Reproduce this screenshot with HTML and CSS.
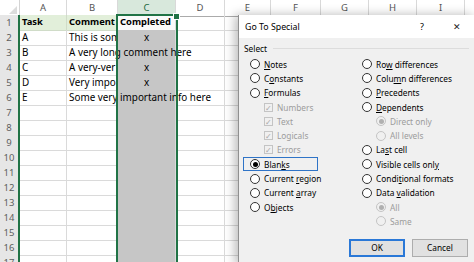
FILE: index.html
```html
<!DOCTYPE html>
<html lang="en">
<head>
    <meta charset="UTF-8">
    <title>Go To Special</title>
    <link rel="stylesheet" href="styles.css">
</head>
<body>
    <div class="sheet">
        <div class="row head">
            <div class="corner"><span class="tri"></span></div>
            <div class="ch">A</div><div class="ch">B</div><div class="ch on">C</div><div class="ch">D</div>
            <div class="ch">E</div><div class="ch">F</div><div class="ch">G</div><div class="ch">H</div><div class="ch">I</div>
        </div>
        <div class="row">
            <div class="rh">1</div><div class="c fill b">Task</div><div class="c fill b">Comment</div><div class="c act b">Completed</div><div class="c"></div><div class="c"></div>
        </div>
        <div class="row">
            <div class="rh">2</div><div class="c">A</div><div class="c">This is som</div><div class="c sel mid">x</div><div class="c"></div><div class="c"></div>
        </div>
        <div class="row">
            <div class="rh">3</div><div class="c">B</div><div class="c spill">A very long comment here</div><div class="c sel"></div><div class="c"></div><div class="c"></div>
        </div>
        <div class="row">
            <div class="rh">4</div><div class="c">C</div><div class="c">A very-ver</div><div class="c sel mid">x</div><div class="c"></div><div class="c"></div>
        </div>
        <div class="row">
            <div class="rh">5</div><div class="c">D</div><div class="c">Very impo</div><div class="c sel mid">x</div><div class="c"></div><div class="c"></div>
        </div>
        <div class="row">
            <div class="rh">6</div><div class="c">E</div><div class="c spill">Some very important info here</div><div class="c sel"></div><div class="c"></div><div class="c"></div>
        </div>
        <div class="row"><div class="rh">7</div><div class="c"></div><div class="c"></div><div class="c sel"></div><div class="c"></div><div class="c"></div></div>
        <div class="row"><div class="rh">8</div><div class="c"></div><div class="c"></div><div class="c sel"></div><div class="c"></div><div class="c"></div></div>
        <div class="row"><div class="rh">9</div><div class="c"></div><div class="c"></div><div class="c sel"></div><div class="c"></div><div class="c"></div></div>
        <div class="row"><div class="rh">10</div><div class="c"></div><div class="c"></div><div class="c sel"></div><div class="c"></div><div class="c"></div></div>
        <div class="row"><div class="rh">11</div><div class="c"></div><div class="c"></div><div class="c sel"></div><div class="c"></div><div class="c"></div></div>
        <div class="row"><div class="rh">12</div><div class="c"></div><div class="c"></div><div class="c sel"></div><div class="c"></div><div class="c"></div></div>
        <div class="row"><div class="rh">13</div><div class="c"></div><div class="c"></div><div class="c sel"></div><div class="c"></div><div class="c"></div></div>
        <div class="row"><div class="rh">14</div><div class="c"></div><div class="c"></div><div class="c sel"></div><div class="c"></div><div class="c"></div></div>
        <div class="row"><div class="rh">15</div><div class="c"></div><div class="c"></div><div class="c sel"></div><div class="c"></div><div class="c"></div></div>
        <div class="row"><div class="rh">16</div><div class="c"></div><div class="c"></div><div class="c sel"></div><div class="c"></div><div class="c"></div></div>
        <div class="row"><div class="rh">17</div><div class="c"></div><div class="c"></div><div class="c sel"></div><div class="c"></div><div class="c"></div></div>

        <div class="selection"><span class="handle"></span></div>

        <div class="dlg">
            <div class="dlg-title">
                <span>Go To Special</span>
                <span class="help">?</span>
                <span class="close">&#x2715;</span>
            </div>
            <div class="dlg-body">
                <div class="legend"><span>Select</span><span class="rule"></span></div>
                <div class="options">
                    <div class="col">
                        <div class="opt"><span class="radio"></span><span><u>N</u>otes</span></div>
                        <div class="opt"><span class="radio"></span><span>C<u>o</u>nstants</span></div>
                        <div class="opt"><span class="radio"></span><span><u>F</u>ormulas</span></div>
                        <div class="opt sub off"><span class="check">&#x2713;</span><span>Numbers</span></div>
                        <div class="opt sub off"><span class="check">&#x2713;</span><span>Text</span></div>
                        <div class="opt sub off"><span class="check">&#x2713;</span><span>Logicals</span></div>
                        <div class="opt sub off"><span class="check">&#x2713;</span><span>Errors</span></div>
                        <div class="opt focus"><span class="radio on"></span><span>Blan<u>k</u>s</span></div>
                        <div class="opt"><span class="radio"></span><span>Current <u>r</u>egion</span></div>
                        <div class="opt"><span class="radio"></span><span>Current <u>a</u>rray</span></div>
                        <div class="opt"><span class="radio"></span><span>O<u>b</u>jects</span></div>
                    </div>
                    <div class="col">
                        <div class="opt"><span class="radio"></span><span>Ro<u>w</u> differences</span></div>
                        <div class="opt"><span class="radio"></span><span>Colu<u>m</u>n differences</span></div>
                        <div class="opt"><span class="radio"></span><span><u>P</u>recedents</span></div>
                        <div class="opt"><span class="radio"></span><span><u>D</u>ependents</span></div>
                        <div class="opt sub off"><span class="radio on"></span><span>Direct only</span></div>
                        <div class="opt sub off"><span class="radio"></span><span>All levels</span></div>
                        <div class="opt"><span class="radio"></span><span>La<u>s</u>t cell</span></div>
                        <div class="opt"><span class="radio"></span><span>Visible cells onl<u>y</u></span></div>
                        <div class="opt"><span class="radio"></span><span>Condi<u>t</u>ional formats</span></div>
                        <div class="opt"><span class="radio"></span><span>Data <u>v</u>alidation</span></div>
                        <div class="opt sub off"><span class="radio on"></span><span>All</span></div>
                        <div class="opt sub off"><span class="radio"></span><span>Same</span></div>
                    </div>
                </div>
                <div class="buttons">
                    <button class="btn default">OK</button>
                    <button class="btn">Cancel</button>
                </div>
            </div>
        </div>
    </div>
</body>
</html>
```
FILE: styles.css
```css
body {
    margin: 0;
    background: #ffffff;
    overflow: hidden;
    font-family: "Noto Sans", sans-serif;
}

.sheet {
    position: relative;
    width: 474px;
    height: 262px;
    overflow: hidden;
}

.row {
    display: grid;
    grid-template-columns: 20px 47px 51px 58px 49px 46px 50px 48px 48px 48px 48px;
    height: 15px;
}

.head {
    background: #ffffff;
}

.corner {
    border-right: 1px solid #d4d4d4;
    border-bottom: 1px solid #ababab;
    display: flex;
    align-items: flex-end;
    justify-content: flex-end;
    padding: 0 2px 2px 0;
    box-sizing: border-box;
}

.tri {
    width: 0;
    height: 0;
    border-left: 8px solid transparent;
    border-bottom: 8px solid #dcdcdc;
}

.ch {
    font-size: 9.5px;
    color: #555;
    text-align: center;
    line-height: 15px;
    border-right: 1px solid #d9d9d9;
    border-bottom: 1px solid #ababab;
    box-sizing: border-box;
}

.ch.on {
    background: #d8e8dc;
    color: #1e6b42;
    border-bottom: 2px solid #217346;
}

.rh {
    font-size: 9.5px;
    color: #5e5e5e;
    text-align: center;
    line-height: 15px;
    background: #e6e6e6;
    border-right: 2px solid #217346;
    border-bottom: 1px solid #c8c8c8;
    box-sizing: border-box;
}

.c {
    font-size: 9.9px;
    line-height: 14px;
    color: #000;
    padding-left: 2px;
    white-space: nowrap;
    overflow: hidden;
    border-right: 1px solid #dadada;
    border-bottom: 1px solid #dadada;
    box-sizing: border-box;
}

.c.b {
    font-weight: bold;
    font-size: 9.4px;
}

.c.fill {
    background: #e2efda;
    border-right-color: #d0dcc8;
    border-bottom-color: #d0dcc8;
}

.c.act {
    background: #fafafa;
}

.c.sel {
    background: #c6c6c6;
    border-bottom-color: #acacac;
}

.c.mid {
    text-align: center;
    padding-left: 0;
}

.c.spill {
    overflow: visible;
    position: relative;
    z-index: 1;
}

.selection {
    position: absolute;
    left: 116px;
    top: 14px;
    width: 62px;
    height: 260px;
    border: 2px solid #217346;
    box-sizing: border-box;
    z-index: 2;
}

.handle {
    position: absolute;
    right: -4px;
    top: -3px;
    width: 5px;
    height: 5px;
    background: #217346;
    border: 1px solid #fff;
}

/* dialog */
.dlg {
    position: absolute;
    left: 238px;
    top: 15px;
    width: 236px;
    height: 250px;
    background: #f0f0f0;
    border-left: 1px solid #8f8f8f;
    box-shadow: -3px 0 10px rgba(0,0,0,0.28);
    z-index: 3;
    font-size: 8.3px;
    color: #000;
}

.dlg-title {
    height: 23px;
    background: #ffffff;
    display: flex;
    align-items: center;
    padding-left: 6px;
    font-size: 8.8px;
}

.help {
    margin-left: auto;
    width: 20px;
    text-align: center;
    font-size: 9px;
}

.close {
    width: 30px;
    margin: 0 3px 0 10px;
    text-align: center;
    font-size: 9px;
    color: #222;
}

.dlg-body {
    padding: 3px 6px 0 5px;
}

.legend {
    display: flex;
    align-items: center;
    height: 15px;
    gap: 6px;
}

.rule {
    flex: 1;
    height: 1px;
    background: #dcdcdc;
}

.options {
    display: grid;
    grid-template-columns: 112px 1fr;
    padding-left: 6px;
    margin-top: 1px;
}

.col {
    display: flex;
    flex-direction: column;
}

.opt {
    display: flex;
    align-items: center;
    height: 14.3px;
}

.opt.sub {
    padding-left: 14px;
}

.opt.off {
    color: #9c9c9c;
}

.opt.focus {
    margin-left: -7px;
    padding-left: 6px;
    width: 75px;
    border: 1px solid #2f74c7;
    box-sizing: border-box;
}

.radio {
    width: 10px;
    height: 10px;
    border: 1px solid #333;
    border-radius: 50%;
    background: #fff;
    box-sizing: border-box;
    margin-right: 4px;
    display: flex;
    align-items: center;
    justify-content: center;
}

.radio.on::after {
    content: "";
    width: 5px;
    height: 5px;
    border-radius: 50%;
    background: #000;
}

.off .radio {
    border-color: #c4c4c4;
    background: #f0f0f0;
}

.off .radio.on::after {
    background: #b0b0b0;
}

.check {
    width: 9px;
    height: 9px;
    border: 1px solid #c4c4c4;
    box-sizing: border-box;
    margin-right: 4px;
    font-size: 8px;
    line-height: 7px;
    text-align: center;
    color: #a8a8a8;
}

.buttons {
    display: flex;
    justify-content: flex-end;
    gap: 7px;
    margin-top: 10px;
    padding-right: 1px;
}

.btn {
    width: 56px;
    height: 18px;
    background: #e1e1e1;
    border: 1px solid #adadad;
    font-family: "Noto Sans", sans-serif;
    font-size: 8.3px;
    padding: 0;
}

.btn.default {
    border: 2px solid #2a78d7;
}
```
